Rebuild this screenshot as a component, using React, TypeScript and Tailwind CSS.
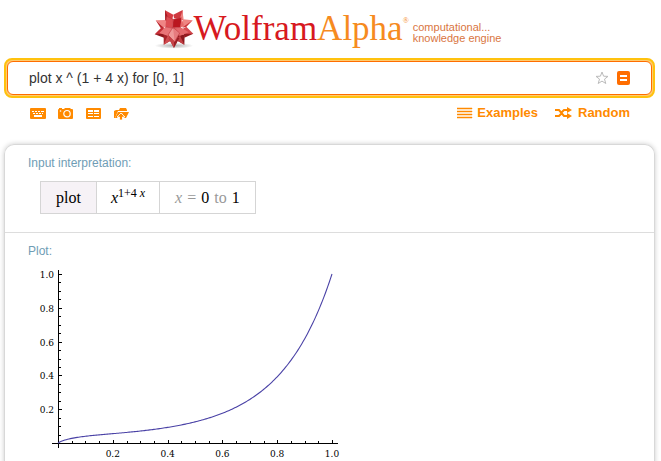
import { useState } from 'react';

const ORIGIN_X = 30;
const ORIGIN_Y = 177;
const SCALE_X = 274;
const SCALE_Y = 169;

const majorTicks = [0.2, 0.4, 0.6, 0.8, 1.0];
const minorTicks = Array.from({ length: 20 }, (_, i) => (i + 1) / 20).filter((_, i) => (i + 1) % 4 !== 0);

const toX = (x: number) => ORIGIN_X + x * SCALE_X;
const toY = (y: number) => ORIGIN_Y - y * SCALE_Y;

function Spikey() {
  return (
    <svg className="h-10 w-10 shrink-0" viewBox="0 0 120 120" aria-hidden="true">
      <defs>
        <radialGradient id="spikeyShadow">
          <stop offset="0" stopColor="#777" stopOpacity="0.6" />
          <stop offset="1" stopColor="#777" stopOpacity="0" />
        </radialGradient>
      </defs>
      <ellipse cx="60" cy="110" rx="58" ry="9" fill="url(#spikeyShadow)" />
      {/* outer spikes */}
      <path d="M33 4 L58 17 L54 34 L34 38 Z" fill="#d63a42" />
      <path d="M33 4 L34 38 L44 30 Z" fill="#a51c24" />
      <path d="M86 3 L88 34 L60 27 L58 17 Z" fill="#cf3940" />
      <path d="M86 3 L88 34 L78 28 Z" fill="#ee8582" />
      <path d="M5 34 L34 33 L40 46 L30 56 Z" fill="#ef8585" />
      <path d="M5 34 L30 56 L22 60 Z" fill="#bd252d" />
      <path d="M116 34 L88 31 L80 54 L96 54 Z" fill="#ef8683" />
      <path d="M116 34 L96 54 L84 56 Z" fill="#c9343a" />
      <path d="M2 76 L24 54 L38 64 L32 80 Z" fill="#c52e36" />
      <path d="M2 76 L32 74 L30 86 Z" fill="#8f181e" />
      <path d="M118 74 L97 53 L82 62 L90 80 Z" fill="#d6494e" />
      <path d="M118 74 L90 74 L91 86 Z" fill="#941b20" />
      <path d="M29 107 L29 78 L48 72 L55 92 Z" fill="#a9242a" />
      <path d="M29 107 L55 92 L42 78 Z" fill="#d14c50" />
      <path d="M91 107 L92 78 L72 72 L65 92 Z" fill="#8c181d" />
      <path d="M91 107 L65 92 L78 80 Z" fill="#c23e43" />
      <path d="M60 117 L44 88 L60 76 L76 88 Z" fill="#9b2026" />
      <path d="M60 117 L44 88 L60 80 Z" fill="#c64247" />
      {/* front faces */}
      <path d="M38 22 L58 31 L55 57 L34 54 Z" fill="#dc4d53" />
      <path d="M58 31 L82 26 L80 55 L55 57 Z" fill="#ba1720" />
      <path d="M82 26 L90 49 L80 55 Z" fill="#e76a69" />
      <path d="M34 54 L55 57 L43 81 L16 72 Z" fill="#e87578" />
      <path d="M80 55 L104 70 L77 81 L58 57 Z" fill="#e46a6d" />
      <path d="M57 55 L77 72 L62 98 L42 78 Z" fill="#ef9999" />
      <path d="M57 55 L77 72 L62 98 Z" fill="#e67b7e" />
      <path
        d="M38 22 L58 31 L82 26 M58 31 L56 56 M34 54 L56 57 L80 55 M57 55 L77 72 L62 98 L42 78 Z"
        fill="none"
        stroke="#c0353c"
        strokeWidth="2"
      />
    </svg>
  );
}

function KeyboardIcon() {
  return (
    <svg className="h-4 w-4" viewBox="0 0 16 16" aria-hidden="true">
      <rect y="3" width="16" height="11" rx="1" fill="#ff8a00" />
      <path
        d="M2 6h2v1H2zM5 6h2v1H5zM8 6h2v1H8zM11 6h3v1h-3zM3 8h2v1H3zM6 8h2v1H6zM9 8h2v1H9zM12 8h1v1h-1zM4 10h8v2H4z"
        fill="#fff"
      />
    </svg>
  );
}

function CameraIcon() {
  return (
    <svg className="h-4 w-4" viewBox="0 0 16 16" aria-hidden="true">
      <path d="M1 4V3h3v1h2l1-1h5l1 1h1q1 0 1 1v8q0 1-1 1H1q-1 0-1-1V5q0-1 1-1z" fill="#ff8a00" />
      <circle cx="9" cy="8.7" r="3.2" fill="none" stroke="#fff" strokeWidth="1.2" />
      <circle cx="2.5" cy="6" r="0.8" fill="#fff" />
    </svg>
  );
}

function TableIcon() {
  return (
    <svg className="h-4 w-4" viewBox="0 0 16 16" aria-hidden="true">
      <rect y="3" width="15" height="11" rx="1" fill="#ff8a00" />
      <path
        d="M2 5h5v2H2zM8 5h5v2H8zM2 8h5v1H2zM8 8h5v1H8zM2 11h5v1H2zM8 11h5v1H8z"
        fill="#fff"
      />
    </svg>
  );
}

function UploadIcon() {
  return (
    <svg className="h-4 w-4" viewBox="0 0 16 16" aria-hidden="true">
      <path d="M0 13V6l2-1 3 0 1-2h6l1 2v1H4L1 13z" fill="#ff8a00" />
      <path d="M4 7h11l-3 6h-2L8 8l-5 5H1z" fill="#ff8a00" />
      <path d="M7 8l4 4H8.500v3h-3v-3H3z" fill="#ff8a00" stroke="#fff" strokeWidth="0.8" />
    </svg>
  );
}

function Plot() {
  const points = Array.from({ length: 201 }, (_, i) => {
    const x = i / 200;
    const y = x === 0 ? 0 : Math.pow(x, 1 + 4 * x);
    return `${toX(x).toFixed(2)},${toY(y).toFixed(2)}`;
  }).join(' ');

  return (
    <svg
      className="block h-[200px] w-[330px] max-w-full"
      viewBox="0 0 330 200"
      role="img"
      aria-label="Plot of x^(1+4x) from 0 to 1"
    >
      <g stroke="#000" strokeWidth="1" shapeRendering="crispEdges">
        <line x1="24" y1="177.5" x2="310" y2="177.5" />
        <line x1="30.5" y1="4" x2="30.5" y2="182" />
        {majorTicks.map((t) => (
          <g key={t}>
            <line x1={Math.round(toX(t)) + 0.5} y1="174" x2={Math.round(toX(t)) + 0.5} y2="177" />
            <line x1="31" y1={Math.round(toY(t)) + 0.5} x2="34" y2={Math.round(toY(t)) + 0.5} />
          </g>
        ))}
        {minorTicks.map((t) => (
          <g key={t}>
            <line x1={Math.round(toX(t)) + 0.5} y1="175" x2={Math.round(toX(t)) + 0.5} y2="177" />
            <line x1="31" y1={Math.round(toY(t)) + 0.5} x2="33" y2={Math.round(toY(t)) + 0.5} />
          </g>
        ))}
      </g>
      <polyline points={points} fill="none" stroke="#4a42a6" strokeWidth="1.1" />
      <g className="font-['DejaVu_Serif',serif] text-[9px]" fill="#000">
        {majorTicks.map((t) => (
          <g key={t}>
            <text x="26" y={toY(t) + 4} textAnchor="end">{t.toFixed(1)}</text>
            <text x={toX(t)} y="191" textAnchor="middle">{t.toFixed(1)}</text>
          </g>
        ))}
      </g>
    </svg>
  );
}

export default function App() {
  const [query, setQuery] = useState('plot x ^ (1 + 4 x) for [0, 1]');

  return (
    <div className="h-screen overflow-hidden bg-white pr-[6px] pl-1 font-['Liberation_Sans',Arial,sans-serif]">
      {/* Logo */}
      <header className="flex h-[58px] items-center justify-center pr-1">
        <a href="#" className="flex items-center">
          <Spikey />
          <span className="flex font-['Liberation_Serif',serif] text-[35px] leading-10">
            <span className="text-[#d71920]">Wolfram</span>
            <span className="text-[#f68b1f]">Alpha</span>
            <sup className="top-0 pt-[8px] text-[8px] leading-none text-[#f68b1f]">®</sup>
          </span>
          <span className="flex flex-col pt-2 pl-1 text-[11px] leading-[11px] text-[#d9753f]">
            <span>computational...</span>
            <span>knowledge engine</span>
          </span>
        </a>
      </header>

      {/* Query */}
      <div className="rounded-lg border-2 border-[#ffc20e] bg-[#ffcb70] p-px">
        <form
          className="flex h-[34px] items-center rounded-md border border-[#ff6d00] bg-white px-[21px]"
          onSubmit={(e) => e.preventDefault()}
        >
          <input
            aria-label="Query"
            value={query}
            onChange={(e) => setQuery(e.target.value)}
            className="min-w-0 flex-1 text-sm text-[#333] outline-none"
          />
          <button type="button" aria-label="Add to favorites">
            <svg className="h-[14px] w-[14px]" viewBox="0 0 14 14">
              <path
                d="M7 1l1.600 4.200 4.400.2-3.500 2.700 1.300 4.400L7 10.100l-3.800 2.400 1.300-4.400L1 5.400l4.400-.2z"
                fill="none"
                stroke="#bbb"
              />
            </svg>
          </button>
          <button type="submit" aria-label="Compute" className="ml-2">
            <svg className="h-[14px] w-[13px]" viewBox="0 0 13 14">
              <rect width="13" height="14" rx="2" fill="#ff6d00" />
              <path d="M3 4h7v2H3zM3 8h7v2H3z" fill="#fff" />
            </svg>
          </button>
        </form>
      </div>

      {/* Toolbar */}
      <nav className="flex h-[46px] items-start justify-between pt-[7px] pr-[25px] pl-[26px]">
        <div className="flex gap-3">
          <button type="button" aria-label="Extended keyboard"><KeyboardIcon /></button>
          <button type="button" aria-label="Image input"><CameraIcon /></button>
          <button type="button" aria-label="Data input"><TableIcon /></button>
          <button type="button" aria-label="File upload"><UploadIcon /></button>
        </div>
        <div className="flex gap-4 text-[13px] leading-4 font-bold text-[#ff8a00]">
          <a href="#" className="flex items-center gap-1">
            <svg className="h-4 w-4" viewBox="0 0 16 16" aria-hidden="true">
              <path d="M0 3h15v1H0zM0 6h15v1H0zM0 9h15v1H0zM0 12h15v1H0z" fill="#ff8a00" stroke="#ff8a00" strokeWidth="0.5" />
            </svg>
            Examples
          </a>
          <a href="#" className="flex items-center gap-1">
            <svg className="h-4 w-5" viewBox="0 0 20 16" aria-hidden="true">
              <path d="M1 5h4l5 6h4M1 11h4l2-2M8 7l2-2h4" fill="none" stroke="#ff8a00" strokeWidth="2" />
              <path d="M13 2l5 3-5 3zM13 8l5 3-5 3z" fill="#ff8a00" />
            </svg>
            Random
          </a>
        </div>
      </nav>

      {/* Results */}
      <main className="rounded-t-[10px] border border-b-0 border-[#d8d8d8] shadow-[0_0_5px_#ccc]">
        <section className="border-b border-[#ddd] px-[23px] pt-[9px] pb-[18px]">
          <h2 className="text-xs leading-[18px] text-[#6f9db5]">Input interpretation:</h2>
          <div className="mt-[9px] ml-3 flex h-[33px] w-fit items-center divide-x divide-[#d5d5d5] border border-[#d5d5d5] font-['Liberation_Serif',serif] text-base text-black">
            <span className="flex h-full items-center bg-[#f6f2f6] px-[15px]">plot</span>
            <span className="flex h-full items-center px-[14px]">
              <span>
                <i>x</i>
                <sup className="text-xs">1+4 <i>x</i></sup>
              </span>
            </span>
            <span className="flex h-full items-center gap-[5px] px-[15px] text-[#999]">
              <i>x</i>
              <span>=</span>
              <span className="text-black">0</span>
              <span>to</span>
              <span className="text-black">1</span>
            </span>
          </div>
        </section>
        <section className="px-[23px] pt-[9px]">
          <h2 className="text-xs leading-[18px] text-[#6f9db5]">Plot:</h2>
          <div className="mt-[6px]">
            <Plot />
          </div>
        </section>
      </main>
    </div>
  );
}
